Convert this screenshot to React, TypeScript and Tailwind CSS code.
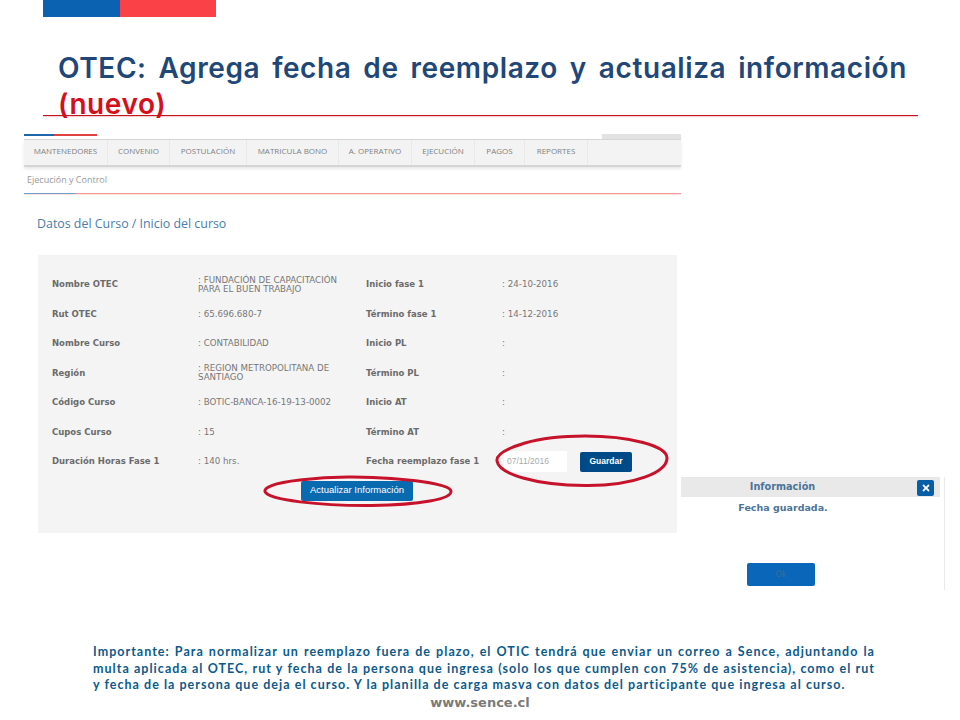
import React from 'react';
import { FaTimes } from 'react-icons/fa';

const tabs = [
  { label: 'MANTENEDORES', width: 'w-[84px]' },
  { label: 'CONVENIO', width: 'w-[62px]' },
  { label: 'POSTULACIÓN', width: 'w-[77px]' },
  { label: 'MATRICULA BONO', width: 'w-[92px]' },
  { label: 'A. OPERATIVO', width: 'w-[73px]' },
  { label: 'EJECUCIÓN', width: 'w-[63px]' },
  { label: 'PAGOS', width: 'w-[50px]' },
  { label: 'REPORTES', width: 'w-[63px]' },
];

const rows = [
  ['Nombre OTEC', ': FUNDACIÓN DE CAPACITACIÓN PARA EL BUEN TRABAJO', 'Inicio fase 1', ': 24-10-2016'],
  ['Rut OTEC', ': 65.696.680-7', 'Término fase 1', ': 14-12-2016'],
  ['Nombre Curso', ': CONTABILIDAD', 'Inicio PL', ':'],
  ['Región', ': REGION METROPOLITANA DE SANTIAGO', 'Término PL', ':'],
  ['Código Curso', ': BOTIC-BANCA-16-19-13-0002', 'Inicio AT', ':'],
  ['Cupos Curso', ': 15', 'Término AT', ':'],
];

const labelClass = "font-['DejaVu_Sans'] text-[8.5px] font-bold text-[#6b6b6b]";
const valueClass = "font-['DejaVu_Sans'] text-[8.7px] leading-[9px] text-[#777]";

const App: React.FC = () => {
  return (
    <div className="relative w-[960px] h-[720px] overflow-hidden bg-white">
      <div className="flex h-[17px] ml-[43px]">
        <div className="w-[77px] bg-[#0a62b0]"></div>
        <div className="w-[96px] bg-[#fb4148]"></div>
      </div>

      <h1 className="ml-[58px] mt-[33px] w-[849px] font-['Inter',sans-serif] text-[28px] leading-[37px] font-semibold tracking-[0.6px] text-[#1f4778]">
        <span className="block whitespace-nowrap [text-align:justify] [text-align-last:justify]">
          OTEC: Agrega fecha de reemplazo y actualiza información
        </span>
        <span className="block -mt-[1px] text-[#d4101c]">(nuevo)</span>
      </h1>

      <div className="ml-[43px] -mt-[8px] w-[875px] h-[1px] bg-[#c5161d] shadow-[0_1px_1px_#f0c4c8]"></div>

      <div className="ml-[24px] mt-[18px] w-[657px]">
        <div className="flex h-[5px]">
          <div className="w-[30px] h-[2px] bg-[#1c66ac]"></div>
          <div className="w-[43px] h-[2px] bg-[#e0433f]"></div>
          <div className="ml-auto w-[79px] bg-[#e2e2e2]"></div>
        </div>
        <nav className="flex h-[28px] bg-[#f3f3f3] border-t border-b-2 border-[#d5d5d5] shadow-[0_2px_3px_#e8e8e8]">
          {tabs.map((tab) => (
            <div
              key={tab.label}
              className={`${tab.width} flex items-center justify-center pb-[3px] border-r border-[#e9e9e9] font-['Open_Sans',sans-serif] text-[8px] text-[#808080] whitespace-nowrap`}
            >
              {tab.label}
            </div>
          ))}
        </nav>
        <div className="h-[26px] pl-[3px] flex items-center font-['Open_Sans',sans-serif] text-[9px] text-[#999]">
          Ejecución y Control
        </div>
        <div className="flex h-[1px] shadow-[0_1px_0_#fbe3e2]">
          <div className="w-[51px] bg-[#6d9fcc]"></div>
          <div className="flex-1 bg-[#f29a98]"></div>
        </div>
        <h2 className="ml-[13px] mt-[21px] font-['Open_Sans',sans-serif] text-[12.4px] leading-[17px] text-[#4a7dac]">
          Datos del Curso / Inicio del curso
        </h2>

        <div className="ml-[14px] mt-[23px] w-[639px] h-[278px] bg-[#f4f4f4] pt-[15px]">
          {rows.map(([label, value, label2, value2]) => (
            <div key={label} className="grid grid-cols-[146px_168px_136px_1fr] h-[29.5px] items-center pl-[14px]">
              <div className={labelClass}>{label}</div>
              <div className={`${valueClass} w-[150px]`}>{value}</div>
              <div className={labelClass}>{label2}</div>
              <div className={valueClass}>{value2}</div>
            </div>
          ))}
          <div className="grid grid-cols-[146px_168px_136px_1fr] h-[29.5px] items-center pl-[14px]">
            <div className={labelClass}>Duración Horas Fase 1</div>
            <div className={valueClass}>: 140 hrs.</div>
            <div className={labelClass}>Fecha reemplazo fase 1</div>
            <div className="flex items-center">
              <div className="ml-[2px] w-[63px] h-[21px] bg-white pl-[3px] flex items-center font-['Liberation_Sans',sans-serif] text-[8.5px] text-[#aaa]">
                07/11/2016
              </div>
              <button className="ml-[13px] w-[52px] h-[20px] rounded-[2px] bg-[#004b87] font-['Liberation_Sans',sans-serif] text-[8.5px] font-bold text-white">
                Guardar
              </button>
            </div>
          </div>
          <button className="block ml-[263px] mt-[4px] w-[112px] h-[20px] rounded-[2px] bg-[#0a6ab0] font-['Liberation_Sans',sans-serif] text-[9.5px] text-white">
            Actualizar Información
          </button>
        </div>
      </div>

      <p className="ml-[93px] mt-[111px] w-[782px] font-['Lato',sans-serif] text-[12.5px] leading-[16.5px] font-bold tracking-[1.03px] text-[#0c5a8c]">
        <span className="block whitespace-nowrap [text-align-last:justify]">
          Importante: Para normalizar un reemplazo fuera de plazo, el OTIC tendrá que enviar un correo a Sence, adjuntando la
        </span>
        <span className="block whitespace-nowrap [text-align-last:justify]">
          multa aplicada al OTEC, rut y fecha de la persona que ingresa (solo los que cumplen con 75% de asistencia), como el rut
        </span>
        <span className="block whitespace-nowrap">
          y fecha de la persona que deja el curso. Y la planilla de carga masva con datos del participante que ingresa al curso.
        </span>
      </p>
      <div className="text-center font-['DejaVu_Sans',sans-serif] text-[13px] leading-[17px] font-bold text-[#7a7a7a]">
        www.sence.cl
      </div>

      {/* red marks drawn over the capture */}
      <svg className="absolute left-0 top-0 pointer-events-none" width="960" height="720" fill="none">
        <path
          d="M300 480C272 483 264 488 265 491.5C268 500 320 506 372 505.5C420 505 452 499 451 491C450 484 410 478 352 477C332 476.8 316 478 300 480Z"
          stroke="#c7122b"
          strokeWidth="3"
        />
        <path
          d="M525 443C505 449 496 455 497 461C499 474 535 485 585 485.5C635 486 667 472 667 458C667 446 630 436 585 436C562 436 542 438 525 443Z"
          stroke="#c7122b"
          strokeWidth="3"
        />
      </svg>

      {/* info dialog pasted on the slide */}
      <div className="absolute left-[681px] top-[477px] w-[264px] h-[113px] bg-white border-r border-[#e6e9ee]">
        <div className="relative h-[20px] w-[259px] bg-[#e9e9e9] font-['DejaVu_Sans',sans-serif] text-[9.7px] leading-[20px] font-bold text-[#4a7499]">
          <div className="w-[203px] text-center">Información</div>
          <div className="absolute left-[236px] top-[3px] w-[17px] h-[16px] rounded-[2px] bg-[#0a5ea8] flex items-center justify-center text-white">
            <FaTimes size={10} />
          </div>
        </div>
        <div className="w-[204px] mt-[5px] text-center font-['DejaVu_Sans',sans-serif] text-[9.5px] leading-[12px] font-bold text-[#4a7499]">
          Fecha guardada.
        </div>
        <button className="absolute left-[66px] top-[86px] w-[68px] h-[23px] rounded-[2px] bg-[#0a66b8] font-['DejaVu_Sans',sans-serif] text-[8px] text-[#3c6d9c]">
          Ok
        </button>
      </div>
    </div>
  );
};

export default App;
